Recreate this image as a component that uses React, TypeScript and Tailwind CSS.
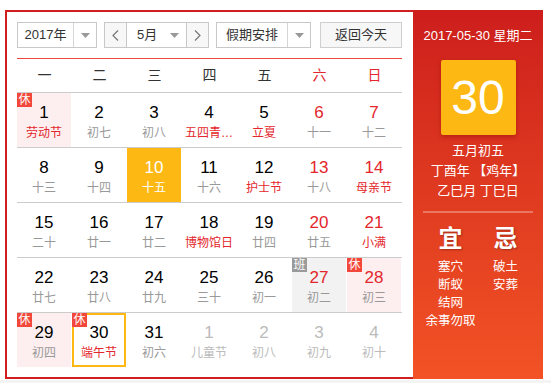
import React from 'react'

type Day = {
  n: number
  lunar: string
  other?: boolean
  redNum?: boolean
  redLunar?: boolean
  badge?: '休' | '班'
  bg?: 'pink' | 'gray' | 'today' | 'selected'
}

const weeks: Day[][] = [
  [
    { n: 1, lunar: '劳动节', redLunar: true, badge: '休', bg: 'pink' },
    { n: 2, lunar: '初七' },
    { n: 3, lunar: '初八' },
    { n: 4, lunar: '五四青…', redLunar: true },
    { n: 5, lunar: '立夏', redLunar: true },
    { n: 6, lunar: '十一', redNum: true },
    { n: 7, lunar: '十二', redNum: true },
  ],
  [
    { n: 8, lunar: '十三' },
    { n: 9, lunar: '十四' },
    { n: 10, lunar: '十五', bg: 'today' },
    { n: 11, lunar: '十六' },
    { n: 12, lunar: '护士节', redLunar: true },
    { n: 13, lunar: '十八', redNum: true },
    { n: 14, lunar: '母亲节', redNum: true, redLunar: true },
  ],
  [
    { n: 15, lunar: '二十' },
    { n: 16, lunar: '廿一' },
    { n: 17, lunar: '廿二' },
    { n: 18, lunar: '博物馆日', redLunar: true },
    { n: 19, lunar: '廿四' },
    { n: 20, lunar: '廿五', redNum: true },
    { n: 21, lunar: '小满', redNum: true, redLunar: true },
  ],
  [
    { n: 22, lunar: '廿七' },
    { n: 23, lunar: '廿八' },
    { n: 24, lunar: '廿九' },
    { n: 25, lunar: '三十' },
    { n: 26, lunar: '初一' },
    { n: 27, lunar: '初二', redNum: true, badge: '班', bg: 'gray' },
    { n: 28, lunar: '初三', redNum: true, badge: '休', bg: 'pink' },
  ],
  [
    { n: 29, lunar: '初四', badge: '休', bg: 'pink' },
    { n: 30, lunar: '端午节', redLunar: true, badge: '休', bg: 'selected' },
    { n: 31, lunar: '初六' },
    { n: 1, lunar: '儿童节', other: true },
    { n: 2, lunar: '初八', other: true },
    { n: 3, lunar: '初九', other: true },
    { n: 4, lunar: '初十', other: true },
  ],
]

const weekdays = ['一', '二', '三', '四', '五', '六', '日']

function Caret() {
  return (
    <svg width="9" height="5" viewBox="0 0 9 5">
      <path d="M0 0h9L4.5 5z" fill="#999" />
    </svg>
  )
}

function Chevron({ dir }: { dir: 'l' | 'r' }) {
  return (
    <svg width="7" height="11" viewBox="0 0 7 11">
      <path d={dir === 'l' ? 'M6 0.5L1 5.5l5 5' : 'M1 0.5l5 5-5 5'} stroke="#777" strokeWidth="1.2" fill="none" />
    </svg>
  )
}

function Cell({ d }: { d: Day }) {
  const bg =
    d.bg === 'pink'
      ? 'bg-[#fdefef]'
      : d.bg === 'gray'
        ? 'bg-[#f2f2f2]'
        : d.bg === 'today'
          ? 'bg-[#fdb813]'
          : ''
  const border = d.bg === 'selected' ? 'border-2 border-[#fdb813]' : ''
  const numColor = d.bg === 'today' ? 'text-white' : d.other ? 'text-[#bbb]' : d.redNum ? 'text-[#e3262b]' : 'text-black'
  const lunarColor = d.bg === 'today' ? 'text-white' : d.other ? 'text-[#bbb]' : d.redLunar ? 'text-[#e3262b]' : 'text-[#999]'
  return (
    <div className={`relative w-[54px] h-[54px] box-border flex flex-col items-center ${bg} ${border} ${d.bg === 'selected' ? 'pt-[8px]' : 'pt-[10px]'}`}>
      {d.badge && (
        <span
          className={`absolute ${d.bg === 'selected' ? '-top-[2px] -left-[2px]' : 'top-0 left-0'} w-[15px] h-[14px] text-[12px] leading-[14px] text-white text-center ${d.badge === '休' ? 'bg-[#f2473a]' : 'bg-[#9a9a9a]'}`}
        >
          {d.badge}
        </span>
      )}
      <span className={`text-[17px] leading-[20px] ${numColor}`}>{d.n}</span>
      <span className={`mt-[2px] text-[12px] leading-[16px] whitespace-nowrap ${lunarColor}`}>{d.lunar}</span>
    </div>
  )
}

export default function App() {
  return (
    <div className="w-[551px] h-[383px] bg-white font-['Liberation_Sans','Noto_Sans_CJK_SC',sans-serif] text-[#333]">
      <div className="pt-[10px] pl-[5px]">
        <div className="flex w-[538px] h-[369px]">
          {/* main calendar */}
          <div className="w-[408px] h-full box-border border-2 border-r-0 border-[#d01f1f] pt-[10px] pl-[10px]">
            <div className="flex h-[26px] text-[13px]">
              <div className="flex w-[80px] h-full box-border border border-[#c8c8c8]">
                <div className="w-[55px] flex items-center justify-center">2017年</div>
                <div className="flex-1 flex items-center justify-center border-l border-[#d5d5d5]">
                  <Caret />
                </div>
              </div>
              <div className="ml-[7px] flex w-[105px] h-full box-border border border-[#c8c8c8]">
                <div className="w-[22px] flex items-center justify-center bg-[#f7f7f7] border-r border-[#c8c8c8]">
                  <Chevron dir="l" />
                </div>
                <div className="flex-1 flex items-center pl-[10px] pr-[7px]">
                  <span className="flex-1">5月</span>
                  <Caret />
                </div>
                <div className="w-[22px] flex items-center justify-center bg-[#f7f7f7] border-l border-[#c8c8c8]">
                  <Chevron dir="r" />
                </div>
              </div>
              <div className="ml-[7px] flex w-[95px] h-full box-border border border-[#c8c8c8]">
                <div className="w-[70px] flex items-center justify-center">假期安排</div>
                <div className="flex-1 flex items-center justify-center border-l border-[#d5d5d5]">
                  <Caret />
                </div>
              </div>
              <div className="ml-[9px] w-[82px] h-full box-border border border-[#cfcfcf] bg-[#f7f7f7] flex items-center justify-center">
                返回今天
              </div>
            </div>
            <div className="w-[385px] mt-[10px] border-t border-[#f0493a]" />
            <div className="w-[385px] grid grid-cols-[repeat(7,55px)] h-[34px] border-b border-[#ccc]">
              {weekdays.map((w, i) => (
                <div
                  key={w}
                  className={`flex items-center justify-center text-[14px] ${i >= 5 ? 'text-[#e3262b]' : 'text-[#333]'}`}
                >
                  {w}
                </div>
              ))}
            </div>
            {weeks.map((week, wi) => (
              <div
                key={wi}
                className={`w-[385px] grid grid-cols-[repeat(7,55px)] ${wi < weeks.length - 1 ? 'border-b border-[#ccc] h-[55px]' : 'h-[54px]'}`}
              >
                {week.map((d, di) => (
                  <Cell key={di} d={d} />
                ))}
              </div>
            ))}
          </div>

          {/* side panel */}
          <div className="w-[130px] h-full bg-gradient-to-b from-[#cd1d1c] to-[#f25225] text-white flex flex-col items-center pt-[18px]">
            <div className="text-[13px] leading-[16px]">2017-05-30 星期二</div>
            <div className="mt-[16px] w-[75px] h-[75px] rounded-[2px] bg-[#fdb813] shadow-[0_2px_4px_rgba(120,0,0,0.35)] flex items-center justify-center text-[48px] leading-none">
              30
            </div>
            <div className="mt-[6px] text-[13px] leading-[20px] text-center">
              <div>五月初五</div>
              <div>丁酉年 【鸡年】</div>
              <div>乙巳月 丁巳日</div>
            </div>
            <div className="mt-[10px] w-[110px] border-t-2 border-white/30" />
            <div className="mt-[12px] flex gap-[5px]">
              <div className="w-[50px] flex flex-col items-center">
                <div className="text-[24px] leading-[28px] font-bold [text-shadow:1px_1px_2px_rgba(0,0,0,0.3)]">宜</div>
                <div className="mt-[5px] text-[12.5px] leading-[18px] text-center whitespace-nowrap">
                  <div>塞穴</div>
                  <div>断蚁</div>
                  <div>结网</div>
                  <div>余事勿取</div>
                </div>
              </div>
              <div className="w-[50px] flex flex-col items-center">
                <div className="text-[24px] leading-[28px] font-bold [text-shadow:1px_1px_2px_rgba(0,0,0,0.3)]">忌</div>
                <div className="mt-[5px] text-[12.5px] leading-[18px] text-center whitespace-nowrap">
                  <div>破土</div>
                  <div>安葬</div>
                </div>
              </div>
            </div>
          </div>
        </div>
        <div className="-ml-[5px] mt-[1px] w-[551px] h-[3px] bg-[#f4f4f4]" />
      </div>
    </div>
  )
}
